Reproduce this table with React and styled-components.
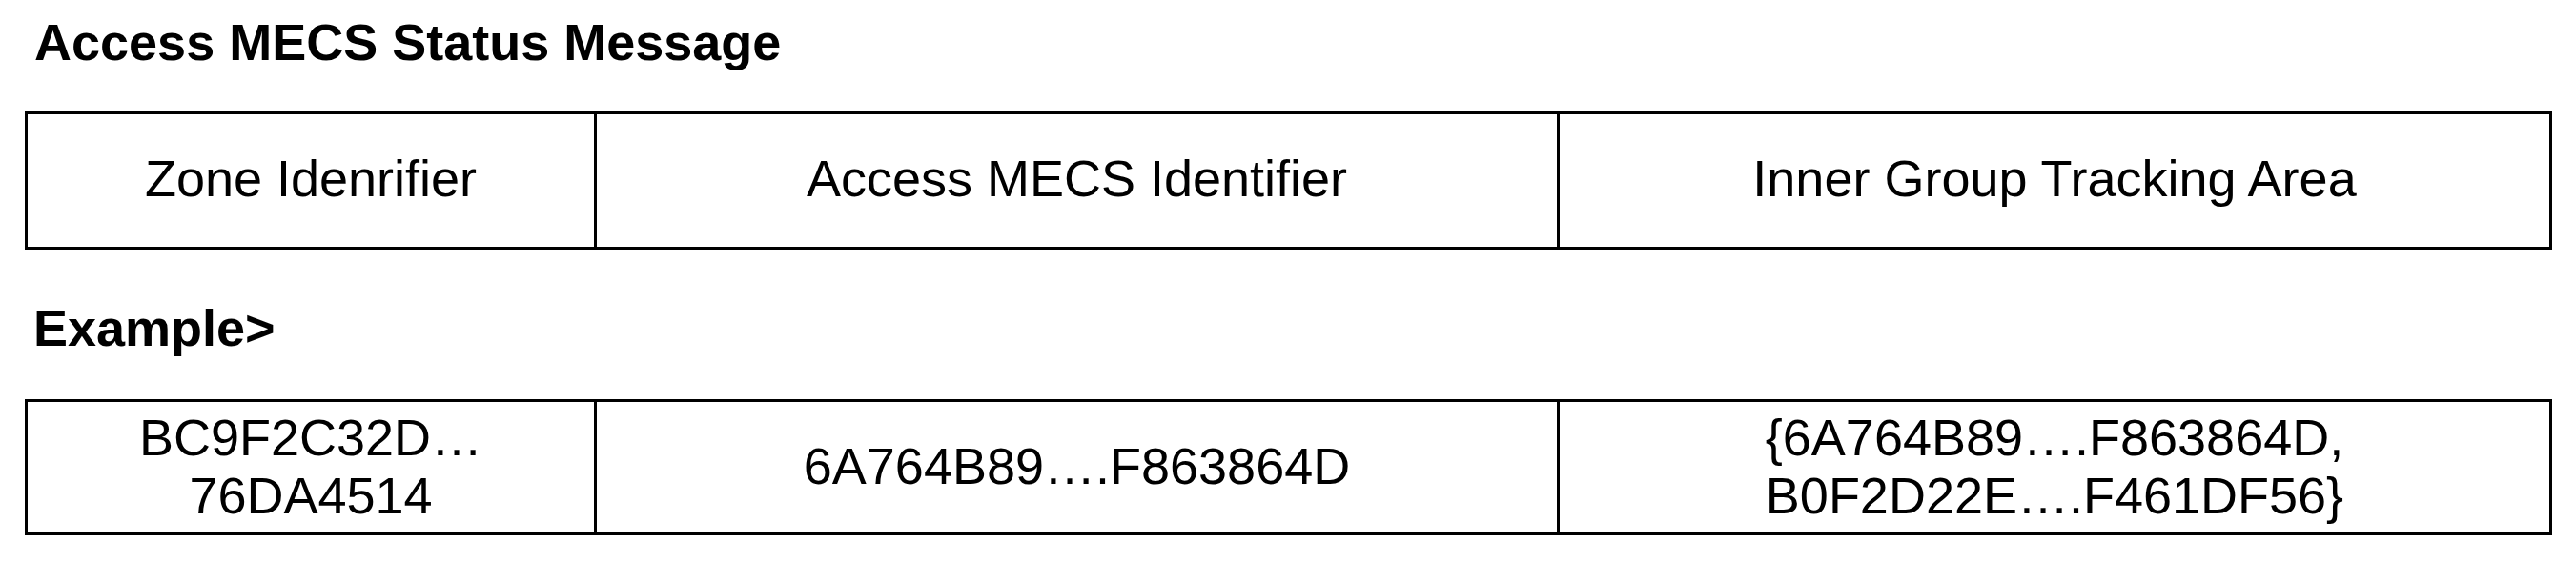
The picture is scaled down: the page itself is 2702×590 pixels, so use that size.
import React from 'react';
import styled, { createGlobalStyle } from 'styled-components';

const GlobalStyle = createGlobalStyle`
  *, *::before, *::after {
    box-sizing: border-box;
  }
  body {
    margin: 0;
    background: #ffffff;
    color: #000000;
    font-family: "Liberation Sans", Arial, Helvetica, sans-serif;
  }
`;

const Page = styled.main`
  width: 2702px;
  padding: 17px 25px 0 26px;
`;

const Heading = styled.h2`
  margin: ${(p) => p.$top}px 0 0 0;
  padding-left: ${(p) => p.$indent}px;
  font-size: 54px;
  line-height: 54px;
  font-weight: bold;
`;

const Table = styled.div`
  display: grid;
  grid-template-columns: minmax(0, 594fr) minmax(0, 1010fr) minmax(0, 1041fr);
  height: ${(p) => p.$height}px;
  margin-top: ${(p) => p.$top}px;
  border: 3px solid #000;
`;

const Cell = styled.div`
  display: flex;
  align-items: center;
  justify-content: center;
  text-align: center;
  font-size: 54px;
  line-height: 61px;
  padding-bottom: ${(p) => p.$shift || 0}px;
  & + & {
    border-left: 3px solid #000;
  }
`;

const header = ['Zone Idenrifier', 'Access MECS Identifier', 'Inner Group Tracking Area'];

const example = [
  ['BC9F2C32D…', '76DA4514'],
  ['6A764B89….F863864D'],
  ['{6A764B89….F863864D,', 'B0F2D22E….F461DF56}'],
];

function App() {
  return (
    <Page>
      <GlobalStyle />
      <Heading $top={0} $indent={10}>Access MECS Status Message</Heading>
      <Table $top={46} $height={145}>
        {header.map((h) => (
          <Cell key={h} $shift={4}>{h}</Cell>
        ))}
      </Table>
      <Heading $top={55} $indent={9}>Example&gt;</Heading>
      <Table $top={48} $height={143}>
        {example.map((lines, i) => (
          <Cell key={i} $shift={2}>
            <div>
              {lines.map((l) => (
                <div key={l}>{l}</div>
              ))}
            </div>
          </Cell>
        ))}
      </Table>
    </Page>
  );
}

export default App;
